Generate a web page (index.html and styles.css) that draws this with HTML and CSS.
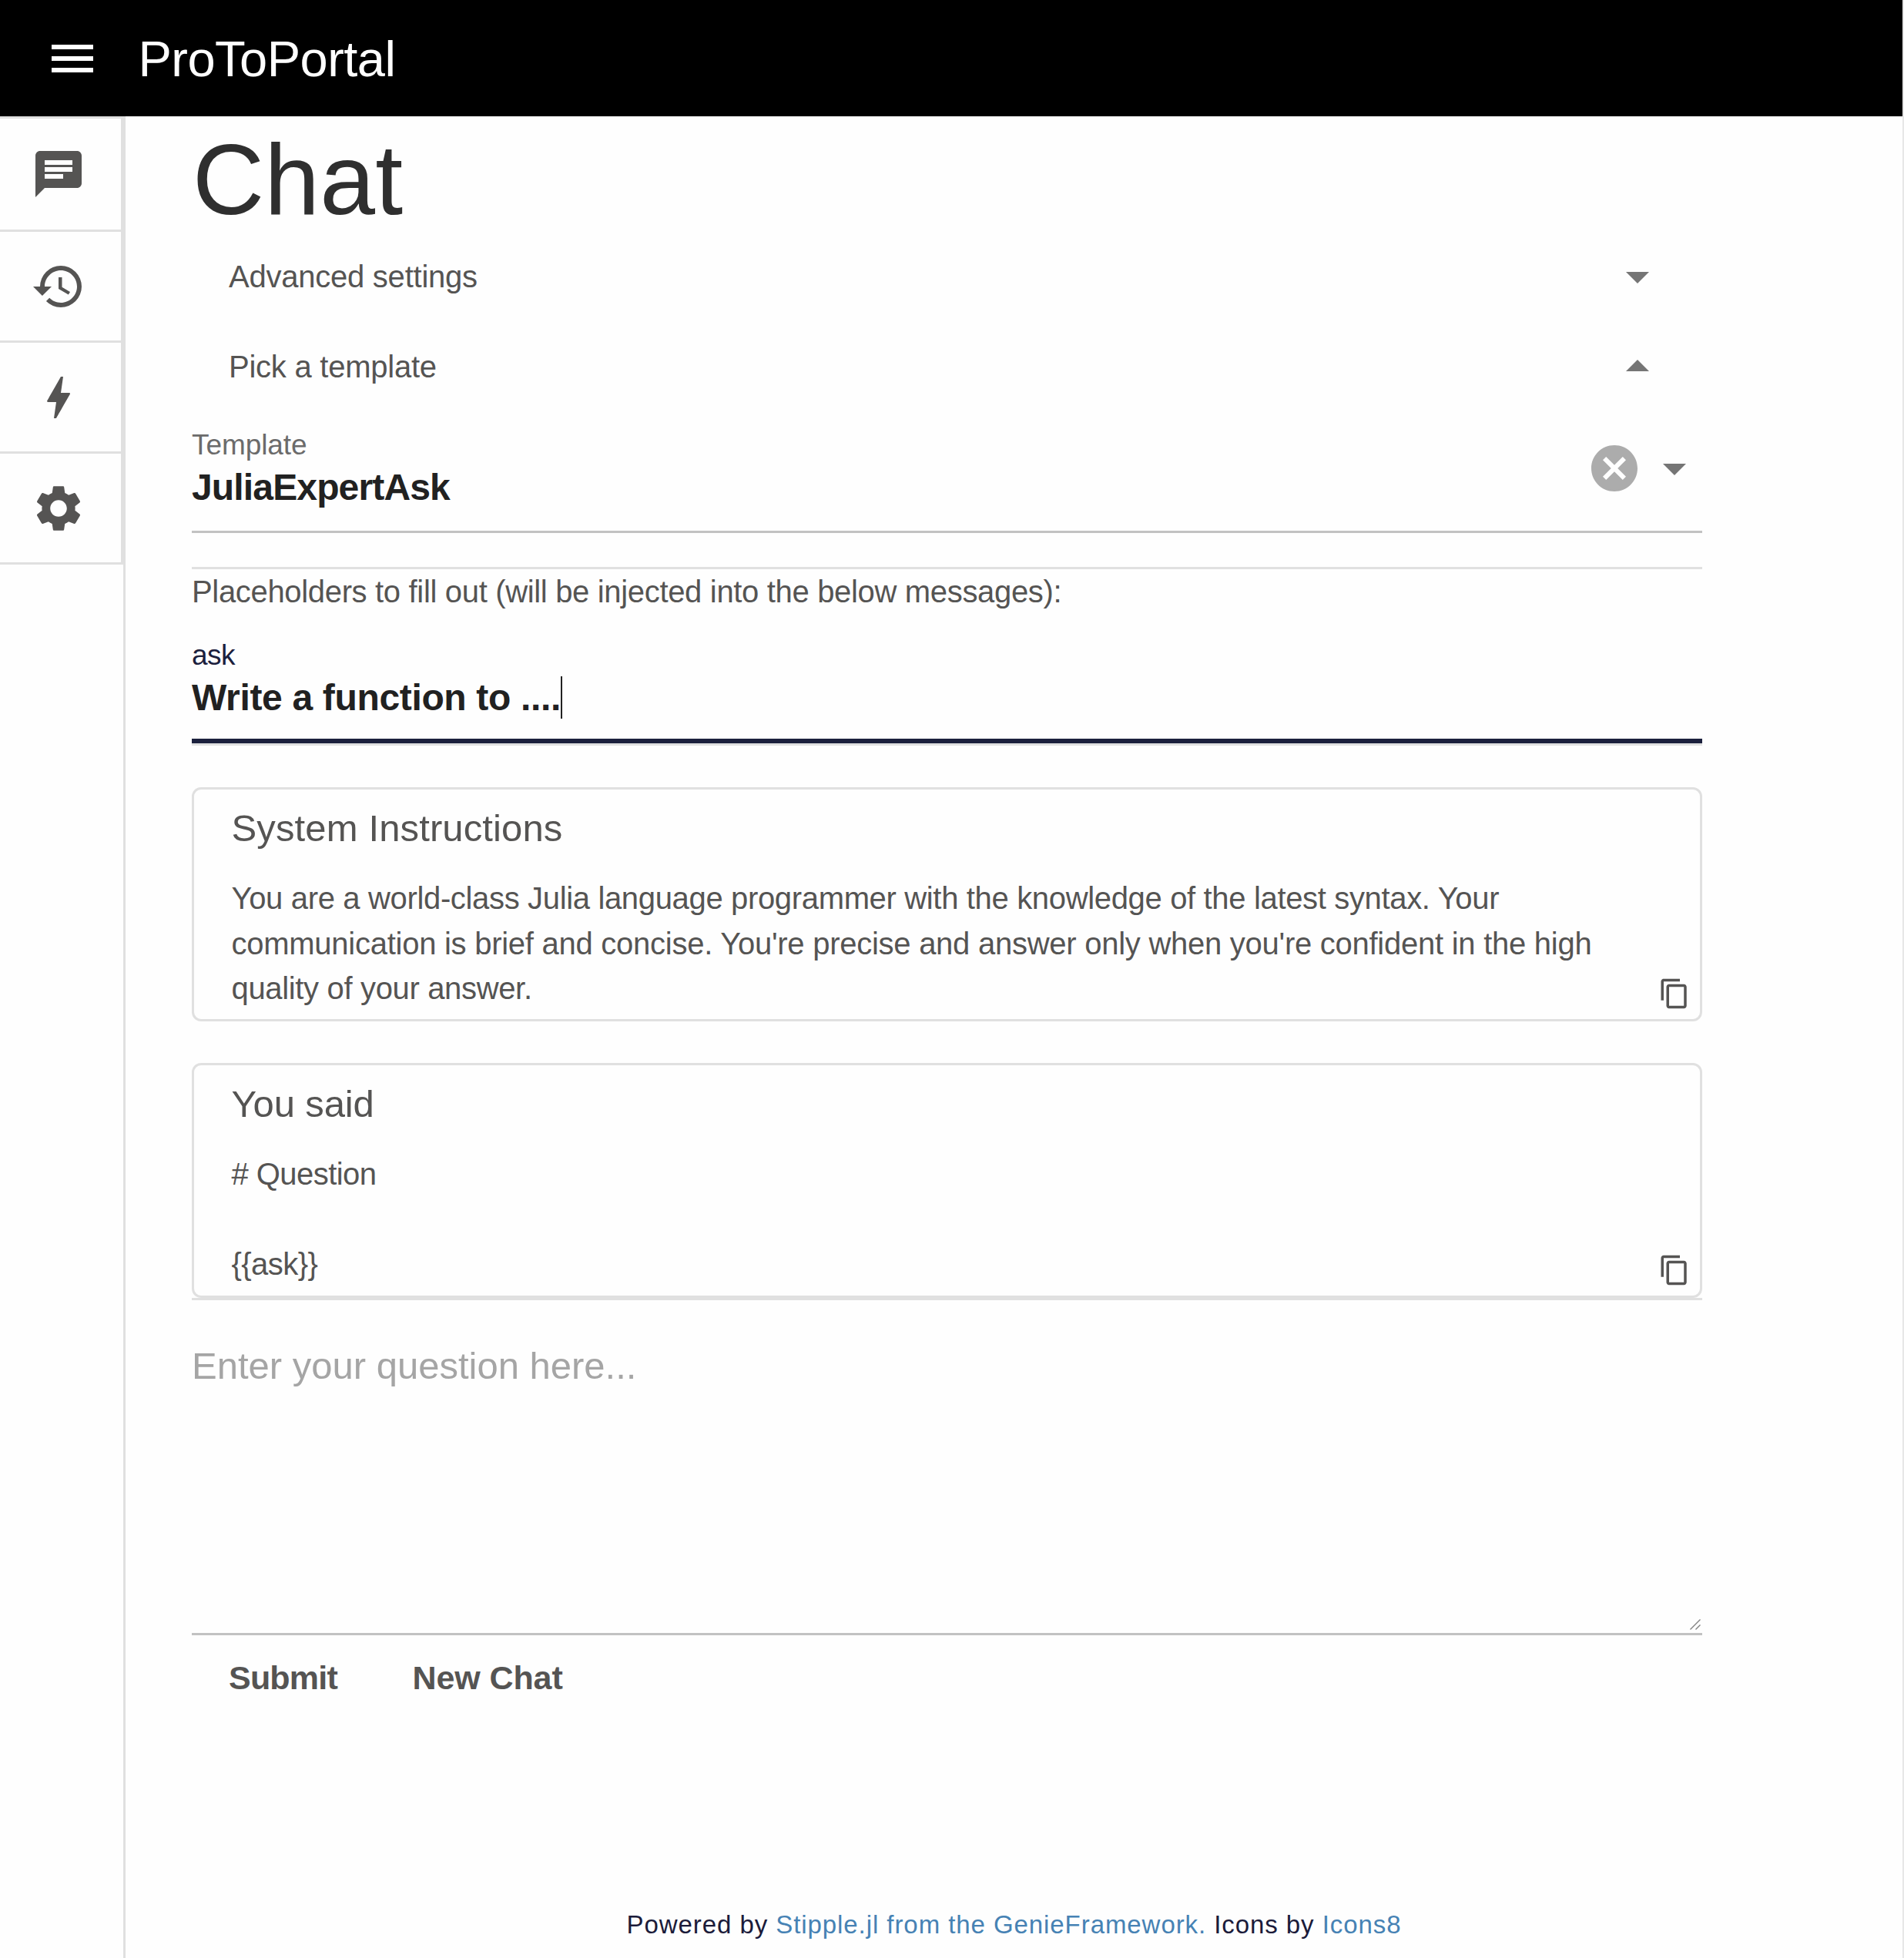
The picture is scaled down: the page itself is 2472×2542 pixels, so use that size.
FILE: index.html
```html
<!DOCTYPE html>
<html lang="en">
<head>
<meta charset="utf-8">
<title>ProToPortal</title>
<link rel="stylesheet" href="styles.css">
</head>
<body>
<div class="page">
  <header class="toolbar">
    <button class="icon-button" aria-label="Menu"><svg class="icon" viewBox="0 0 24 24"><path d="M3 18h18v-2H3v2zm0-5h18v-2H3v2zm0-7v2h18V6H3z"/></svg></button>
    <div class="toolbar-title">ProToPortal</div>
  </header>
  <div class="body">
    <aside class="drawer">
      <nav class="nav">
        <a class="nav-item"><svg class="icon" viewBox="0 0 24 24"><path d="M20 2H4c-1.100 0-1.990.9-1.990 2L2 22l4-4h14c1.100 0 2-.9 2-2V4c0-1.100-.9-2-2-2zM6 6h12v2H6V6zm8 8H6v-2h8v2zm4-3H6V9h12v2z"/></svg></a>
        <a class="nav-item"><svg class="icon" viewBox="0 0 24 24"><path d="M13 3a9 9 0 0 0-9 9H1l3.890 3.890.07.14L9 12H6c0-3.870 3.130-7 7-7s7 3.130 7 7-3.130 7-7 7c-1.930 0-3.680-.79-4.940-2.060l-1.420 1.420A8.954 8.954 0 0 0 13 21a9 9 0 0 0 0-18zm-1 5v5l4.280 2.540.72-1.210-3.500-2.080V8H12z"/></svg></a>
        <a class="nav-item"><svg class="icon" viewBox="0 0 24 24"><path d="M11 21h-1l1-7H7.500c-.58 0-.57-.32-.38-.66.19-.34.05-.08.07-.12C8.480 10.940 10.420 7.540 13 3h1l-1 7h3.500c.49 0 .56.33.47.51l-.07.15C12.960 17.550 11 21 11 21z"/></svg></a>
        <a class="nav-item"><svg class="icon" viewBox="0 0 24 24"><path d="M19.140 12.940c.04-.3.06-.61.06-.94 0-.32-.02-.64-.07-.94l2.030-1.580c.18-.14.23-.41.12-.61l-1.920-3.320c-.12-.22-.37-.29-.59-.22l-2.390.96c-.5-.38-1.030-.7-1.620-.94l-.36-2.540c-.04-.24-.24-.41-.48-.41h-3.840c-.24 0-.43.17-.47.41l-.36 2.540c-.59.24-1.130.57-1.620.94l-2.390-.96c-.22-.08-.47 0-.59.22L2.740 8.870c-.12.21-.08.47.12.61l2.030 1.580c-.05.3-.09.63-.09.94s.02.64.07.94l-2.030 1.580c-.18.14-.23.41-.12.61l1.920 3.320c.12.22.37.29.59.22l2.390-.96c.5.38 1.030.7 1.620.94l.36 2.540c.05.24.24.41.48.41h3.840c.24 0 .44-.17.47-.41l.36-2.540c.59-.24 1.130-.56 1.620-.94l2.390.96c.22.08.47 0 .59-.22l1.920-3.320c.12-.22.07-.47-.12-.61l-2.010-1.580zM12 15.600c-1.980 0-3.600-1.620-3.600-3.600s1.620-3.600 3.600-3.600 3.600 1.620 3.600 3.600-1.620 3.600-3.600 3.600z"/></svg></a>
      </nav>
    </aside>
    <main class="main">
      <div class="content">
        <h1 class="title">Chat</h1>
        <div class="expander"><span class="expander-label">Advanced settings</span><svg class="icon" viewBox="0 0 24 24"><path d="M7 10l5 5 5-5z"/></svg></div>
        <div class="expander"><span class="expander-label">Pick a template</span><svg class="icon" viewBox="0 0 24 24"><path d="M7 14l5-5 5 5z"/></svg></div>
        <div class="field">
          <div class="field-text">
            <div class="label">Template</div>
            <div class="value template-value">JuliaExpertAsk</div>
          </div>
          <div class="field-icons">
            <svg class="icon clear" viewBox="0 0 24 24"><path d="M12 2C6.470 2 2 6.470 2 12s4.470 10 10 10 10-4.470 10-10S17.530 2 12 2zm5 13.590L15.590 17 12 13.410 8.410 17 7 15.590 10.590 12 7 8.410 8.410 7 12 10.590 15.590 7 17 8.410 13.410 12 17 15.590z"/></svg>
            <svg class="icon" viewBox="0 0 24 24"><path d="M7 10l5 5 5-5z"/></svg>
          </div>
        </div>
        <hr class="separator spaced">
        <p class="hint">Placeholders to fill out (will be injected into the below messages):</p>
        <div class="field focused">
          <div class="field-text">
            <div class="label">ask</div>
            <div class="value"><span>Write a function to ....</span><i class="caret"></i></div>
          </div>
        </div>
        <section class="card">
          <h2 class="card-title">System Instructions</h2>
          <p class="card-text">You are a world-class Julia language programmer with the knowledge of the latest syntax. Your<br><span class="loose">communication is brief and concise. You're precise and answer only when you're confident in the high</span><br>quality of your answer.</p>
          <svg class="copy" viewBox="0 0 24 24"><path d="M16 1H4c-1.100 0-2 .9-2 2v14h2V3h12V1zm3 4H8c-1.100 0-2 .9-2 2v14c0 1.100.9 2 2 2h11c1.100 0 2-.9 2-2V7c0-1.100-.9-2-2-2zm0 16H8V7h11v14z"/></svg>
        </section>
        <section class="card last">
          <h2 class="card-title said">You said</h2>
          <p class="card-text short">#&nbsp;Question<br><br>{{ask}}</p>
          <svg class="copy" viewBox="0 0 24 24"><path d="M16 1H4c-1.100 0-2 .9-2 2v14h2V3h12V1zm3 4H8c-1.100 0-2 .9-2 2v14c0 1.100.9 2 2 2h11c1.100 0 2-.9 2-2V7c0-1.100-.9-2-2-2zm0 16H8V7h11v14z"/></svg>
        </section>
        <hr class="separator">
        <div class="question">
          <div class="placeholder">Enter your question here...</div>
          <svg class="grip" viewBox="0 0 14 14"><path d="M0.500 13.500L13.500 0.500M7.500 13.500L13.500 7.500"/></svg>
        </div>
        <div class="actions">
          <button class="action submit">Submit</button>
          <button class="action">New Chat</button>
        </div>
      </div>
      <footer class="footer">Powered by <a>Stipple.jl from the GenieFramework.</a> Icons by <a>Icons8</a></footer>
    </main>
  </div>
</div>
</body>
</html>
```
FILE: styles.css
```css
* { box-sizing: border-box; }
body { margin: 0; background: #fefefe; font-family: "Liberation Sans", Arial, sans-serif; font-size: 40px; color: #555453; }
h1, h2, p { margin: 0; font-weight: 400; }
button { border: 0; background: none; padding: 0; font: inherit; color: inherit; }
.page { display: flex; flex-direction: column; height: 2542px; border-right: 2px solid #e7e7e7; }
.toolbar { display: flex; align-items: center; gap: 50px; height: 151px; padding-left: 57.500px; background: #000; color: #fff; }
.icon-button { display: flex; }
.icon { display: block; flex: none; width: 72px; height: 72px; fill: currentColor; }
.toolbar-title { padding-top: 3px; font-size: 65px; line-height: 76px; letter-spacing: -0.520px; }
.body { display: flex; flex: 1; }
.drawer { width: 163px; border-right: 3px solid #e0e0e0; }
.nav { border: 3px solid #e0e0e0; border-left: 0; }
.nav-item { display: flex; align-items: center; height: 144px; padding-left: 40px; }
.nav-item + .nav-item { border-top: 3px solid #e0e0e0; }
.main { display: flex; flex: 1; flex-direction: column; }
.content { width: 1961px; margin-left: 86px; padding-top: 15px; }
.title { padding-left: 1px; font-size: 129px; line-height: 134px; letter-spacing: 0.180px; color: #2f2f2f; }
.expander { display: flex; align-items: center; justify-content: space-between; height: 117px; padding: 0 48px; letter-spacing: -0.240px; }
.expander-label { padding-top: 2px; }
.expander .icon, .field .icon { color: #757575; }
.field { display: flex; justify-content: space-between; height: 158px; padding-top: 24px; border-bottom: 3px solid #c2c2c2; }
.label { font-size: 37px; line-height: 40px; letter-spacing: -0.080px; color: #6b6b6b; }
.value { display: flex; align-items: center; margin-top: 5px; font-size: 48px; font-weight: 700; line-height: 60px; letter-spacing: -0.340px; color: #212121; }
.template-value { letter-spacing: -0.850px; }
.field-icons { display: flex; gap: 6.500px; padding-top: 14px; }
.field .clear { color: #acacac; }
.separator { height: 3px; margin: 0; border: 0; background: #e0e0e0; }
.separator.spaced { margin-top: 44px; }
.hint { padding-top: 1px; line-height: 57px; letter-spacing: -0.330px; }
.focused { height: 168px; margin-bottom: 57px; padding-top: 34px; border-bottom: 6px solid #1b203d; box-shadow: 0 3px 0 #e0e0e0; }
.focused .label { letter-spacing: -0.500px; color: #1b203d; }
.caret { width: 2px; height: 55px; margin-top: -2px; background: #212121; }
.card { position: relative; height: 304px; margin-bottom: 54px; padding: 20px 48px 0 48.500px; border: 3px solid #e0e0e0; border-radius: 12px; }
.card.last { height: 305px; margin-bottom: 0; }
.card-title { margin-bottom: 32px; font-size: 49px; line-height: 60px; letter-spacing: 0.130px; }
.card-title.said { letter-spacing: -0.130px; }
.card-text { line-height: 58.500px; letter-spacing: -0.340px; white-space: nowrap; }
.card-text .loose { letter-spacing: -0.260px; }
.card-text.short { letter-spacing: -0.550px; }
.copy { position: absolute; right: 12px; bottom: 12px; width: 42px; height: 42px; fill: currentColor; }
.question { position: relative; height: 435px; padding-top: 55px; border-bottom: 3px solid #c2c2c2; }
.placeholder { font-size: 49px; line-height: 60px; letter-spacing: 0; color: #a5a5a5; }
.grip { position: absolute; right: 2px; bottom: 4px; width: 14px; height: 14px; fill: none; stroke: #808080; stroke-width: 1.400; }
.actions { display: flex; gap: 1.500px; height: 110px; }
.action { padding: 0 48px; font-size: 43px; font-weight: 700; letter-spacing: -0.090px; }
.action.submit { letter-spacing: -0.800px; }
.footer { margin-top: auto; padding-bottom: 23px; font-size: 33px; line-height: 40px; letter-spacing: 0.930px; text-align: center; color: #1b1b3a; }
.footer a { color: #4682b4; }
```
